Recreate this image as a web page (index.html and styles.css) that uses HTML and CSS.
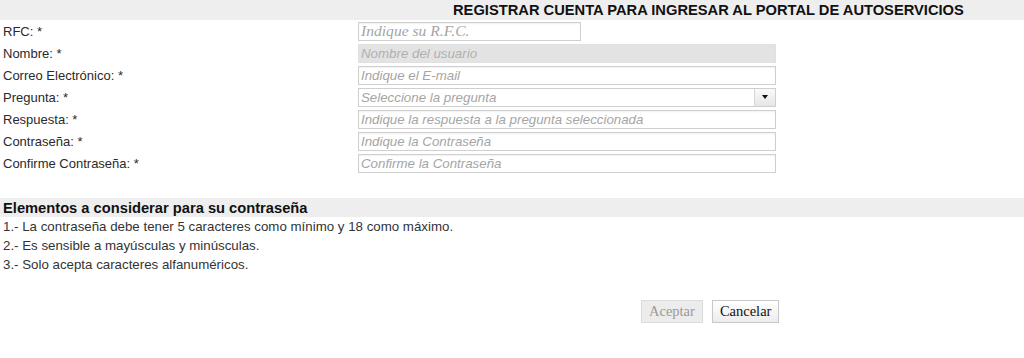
FILE: index.html
```html
<!DOCTYPE html>
<html lang="es">
<head>
<meta charset="utf-8">
<title>Registrar cuenta</title>
<link rel="stylesheet" href="styles.css">
</head>
<body>
<div class="page">
  <div class="title-bar"><h1 class="title">REGISTRAR CUENTA PARA INGRESAR AL PORTAL DE AUTOSERVICIOS</h1></div>
  <form class="form">
    <label class="label" for="rfc">RFC: *</label>
    <div class="field"><input id="rfc" class="input input-short input-serif" type="text" placeholder="Indique su R.F.C."></div>

    <label class="label" for="nombre">Nombre: *</label>
    <div class="field"><input id="nombre" class="input input-disabled" type="text" placeholder="Nombre del usuario" disabled></div>

    <label class="label" for="correo">Correo Electrónico: *</label>
    <div class="field"><input id="correo" class="input" type="text" placeholder="Indique el E-mail"></div>

    <label class="label" for="pregunta">Pregunta: *</label>
    <div class="field">
      <div class="select" id="pregunta">
        <span class="select-text">Seleccione la pregunta</span>
        <span class="select-btn"><span class="caret"></span></span>
      </div>
    </div>

    <label class="label" for="respuesta">Respuesta: *</label>
    <div class="field"><input id="respuesta" class="input" type="text" placeholder="Indique la respuesta a la pregunta seleccionada"></div>

    <label class="label" for="pass">Contraseña: *</label>
    <div class="field"><input id="pass" class="input" type="text" placeholder="Indique la Contraseña"></div>

    <label class="label" for="pass2">Confirme Contraseña: *</label>
    <div class="field"><input id="pass2" class="input" type="text" placeholder="Confirme la Contraseña"></div>
  </form>

  <div class="section-bar"><h2 class="section-title">Elementos a considerar para su contraseña</h2></div>
  <ul class="rules">
    <li>1.- La contraseña debe tener 5 caracteres como mínimo y 18 como máximo.</li>
    <li>2.- Es sensible a mayúsculas y minúsculas.</li>
    <li>3.- Solo acepta caracteres alfanuméricos.</li>
  </ul>

  <div class="actions">
    <button class="btn btn-disabled" type="button" disabled>Aceptar</button>
    <button class="btn" type="button">Cancelar</button>
  </div>
</div>
</body>
</html>
```

FILE: styles.css
```css
* { box-sizing: border-box; }
html, body { margin: 0; padding: 0; background: #fff; }
body {
  font-family: "Liberation Sans", Arial, sans-serif;
  font-size: 13px;
  color: #2a2a2a;
}
.page { width: 1024px; }

.title-bar {
  background: #eeeeee;
  height: 20px;
  display: flex;
  align-items: center;
  padding-left: 453px;
}
.title {
  margin: 0;
  font-size: 14.7px;
  font-weight: bold;
  color: #111;
  white-space: nowrap;
}

.form {
  display: grid;
  grid-template-columns: 358px 1fr;
  grid-auto-rows: 22px;
}
.label {
  display: flex;
  align-items: center;
  padding-left: 3px;
  color: #2a2a2a;
}
.field {
  display: flex;
  align-items: center;
}
.input {
  width: 418px;
  height: 19px;
  border: 1px solid #cfcfcf;
  box-shadow: inset 0 1px 2px rgba(0,0,0,0.06);
  padding: 0 2px;
  font-family: "Liberation Sans", Arial, sans-serif;
  font-size: 13.3px;
  font-style: italic;
  background: #fff;
  outline: none;
}
.input::placeholder { color: #a5a5a5; font-style: italic; }
.input-short { width: 223px; }
.input-serif { font-family: "Liberation Serif", "Times New Roman", serif; font-size: 15.6px; }
.input-disabled { background: #e3e3e3; border-color: #e0e0e0; box-shadow: none; }
.input-disabled::placeholder { color: #b0b0b0; }

.select {
  width: 418px;
  height: 19px;
  border: 1px solid #cfcfcf;
  display: flex;
  align-items: stretch;
  background: #fff;
}
.select-text {
  flex: 1;
  display: flex;
  align-items: center;
  padding-left: 2px;
  font-size: 13.3px;
  font-style: italic;
  color: #a5a5a5;
}
.select-btn {
  width: 21px;
  border-left: 1px solid #d6d6d6;
  background: linear-gradient(#fafafa, #e6e6e6);
  display: flex;
  align-items: center;
  justify-content: center;
}
.caret {
  width: 0;
  height: 0;
  border-left: 3.5px solid transparent;
  border-right: 3.5px solid transparent;
  border-top: 4px solid #111;
}

.section-bar {
  margin-top: 24px;
  background: #eeeeee;
  height: 19px;
  display: flex;
  align-items: center;
  padding-left: 3px;
}
.section-title {
  margin: 0;
  font-size: 14.7px;
  font-weight: bold;
  color: #111;
}

.rules {
  list-style: none;
  margin: 0;
  padding: 0 0 0 3px;
}
.rules li {
  height: 19px;
  line-height: 19px;
  font-size: 13.3px;
  color: #333;
}

.actions {
  display: flex;
  gap: 9px;
  padding-left: 641px;
  margin-top: 26px;
}
.btn {
  font-family: "Liberation Serif", "Times New Roman", serif;
  font-size: 14.5px;
  height: 23px;
  padding: 0 7px;
  border: 1px solid #c8c8c8;
  background: linear-gradient(#ffffff, #ececec);
  color: #111;
  box-shadow: 0 1px 1px rgba(0,0,0,0.08);
}
.btn-disabled {
  background: #ececec;
  color: #9a9a9a;
  border-color: #dcdcdc;
  box-shadow: none;
}
```
